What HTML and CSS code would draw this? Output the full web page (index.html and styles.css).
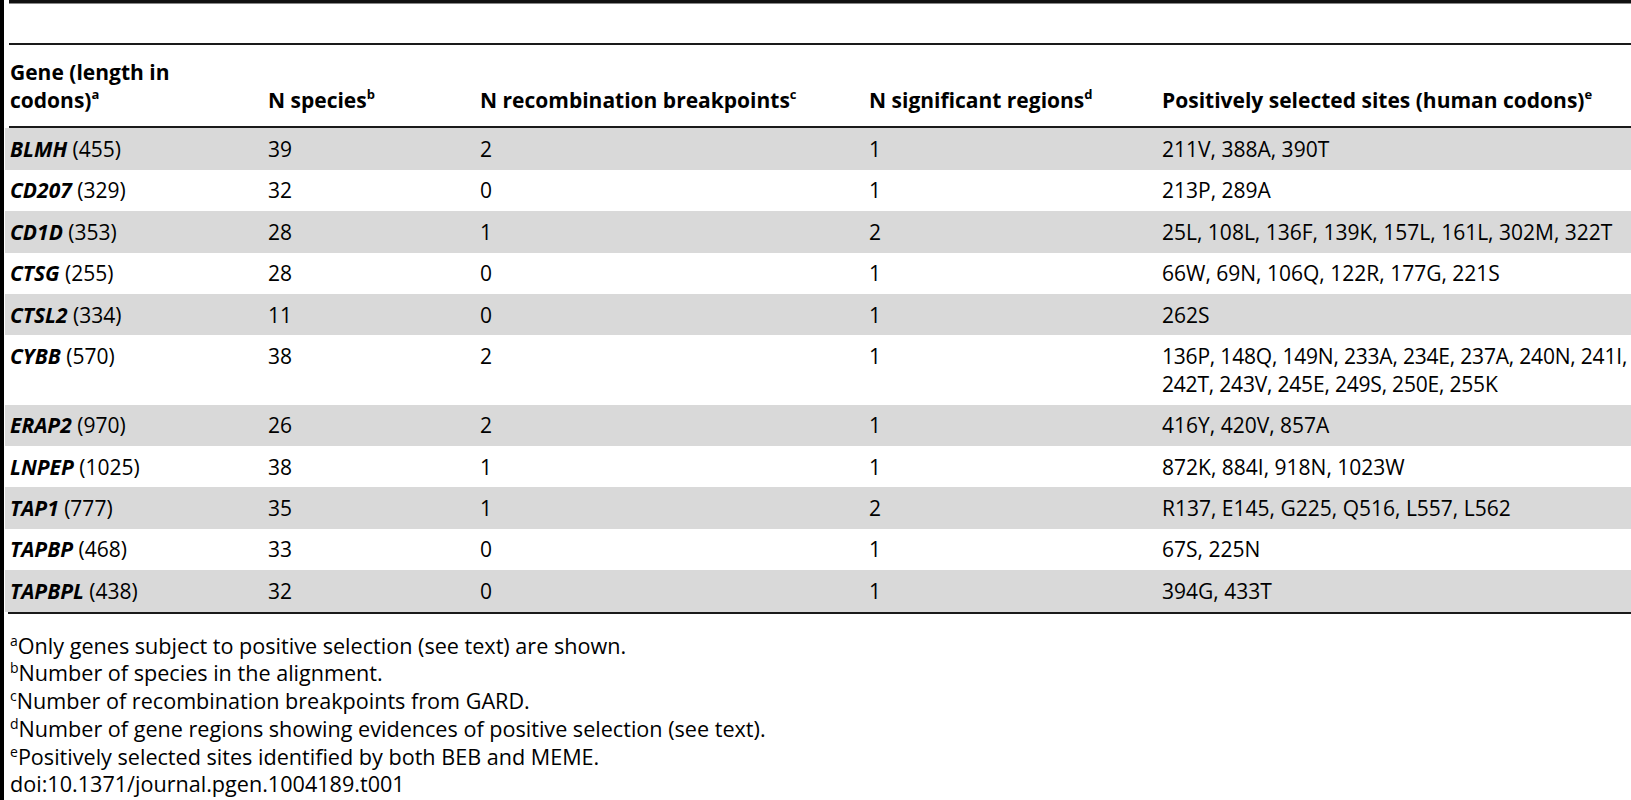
FILE: index.html
```html
<!DOCTYPE html>
<html lang="en">
<head>
    <meta charset="UTF-8">
    <meta name="viewport" content="width=device-width, initial-scale=1.0">
    <title>Table 1 - Positively selected genes</title>
    <link rel="stylesheet" href="styles.css">
</head>
<body>
    <div class="page">
        <!-- Rules above the header -->
        <div class="rule rule-top"></div>
        <div class="rule rule-thin"></div>

        <div class="data-table">
            <!-- Header -->
            <div class="row head-row">
                <div class="cell gene-col">Gene (length in codons)<sup>a</sup></div>
                <div class="cell">N species<sup>b</sup></div>
                <div class="cell">N recombination breakpoints<sup>c</sup></div>
                <div class="cell">N significant regions<sup>d</sup></div>
                <div class="cell">Positively selected sites (human codons)<sup>e</sup></div>
            </div>
            <div class="rule rule-mid"></div>

            <!-- Body -->
            <div class="row shaded">
                <div class="cell"><em class="gene">BLMH</em> (455)</div>
                <div class="cell">39</div>
                <div class="cell">2</div>
                <div class="cell">1</div>
                <div class="cell">211V, 388A, 390T</div>
            </div>
            <div class="row">
                <div class="cell"><em class="gene">CD207</em> (329)</div>
                <div class="cell">32</div>
                <div class="cell">0</div>
                <div class="cell">1</div>
                <div class="cell">213P, 289A</div>
            </div>
            <div class="row shaded">
                <div class="cell"><em class="gene">CD1D</em> (353)</div>
                <div class="cell">28</div>
                <div class="cell">1</div>
                <div class="cell">2</div>
                <div class="cell">25L, 108L, 136F, 139K, 157L, 161L, 302M, 322T</div>
            </div>
            <div class="row">
                <div class="cell"><em class="gene">CTSG</em> (255)</div>
                <div class="cell">28</div>
                <div class="cell">0</div>
                <div class="cell">1</div>
                <div class="cell">66W, 69N, 106Q, 122R, 177G, 221S</div>
            </div>
            <div class="row shaded">
                <div class="cell"><em class="gene">CTSL2</em> (334)</div>
                <div class="cell">11</div>
                <div class="cell">0</div>
                <div class="cell">1</div>
                <div class="cell">262S</div>
            </div>
            <div class="row">
                <div class="cell"><em class="gene">CYBB</em> (570)</div>
                <div class="cell">38</div>
                <div class="cell">2</div>
                <div class="cell">1</div>
                <div class="cell long-list">136P, 148Q, 149N, 233A, 234E, 237A, 240N, 241I,<br>242T, 243V, 245E, 249S, 250E, 255K</div>
            </div>
            <div class="row shaded">
                <div class="cell"><em class="gene">ERAP2</em> (970)</div>
                <div class="cell">26</div>
                <div class="cell">2</div>
                <div class="cell">1</div>
                <div class="cell">416Y, 420V, 857A</div>
            </div>
            <div class="row">
                <div class="cell"><em class="gene">LNPEP</em> (1025)</div>
                <div class="cell">38</div>
                <div class="cell">1</div>
                <div class="cell">1</div>
                <div class="cell">872K, 884I, 918N, 1023W</div>
            </div>
            <div class="row shaded">
                <div class="cell"><em class="gene">TAP1</em> (777)</div>
                <div class="cell">35</div>
                <div class="cell">1</div>
                <div class="cell">2</div>
                <div class="cell">R137, E145, G225, Q516, L557, L562</div>
            </div>
            <div class="row">
                <div class="cell"><em class="gene">TAPBP</em> (468)</div>
                <div class="cell">33</div>
                <div class="cell">0</div>
                <div class="cell">1</div>
                <div class="cell">67S, 225N</div>
            </div>
            <div class="row shaded">
                <div class="cell"><em class="gene">TAPBPL</em> (438)</div>
                <div class="cell">32</div>
                <div class="cell">0</div>
                <div class="cell">1</div>
                <div class="cell">394G, 433T</div>
            </div>
        </div>
        <div class="rule rule-mid"></div>

        <!-- Footnotes -->
        <div class="notes">
            <p><sup>a</sup>Only genes subject to positive selection (see text) are shown.</p>
            <p><sup>b</sup>Number of species in the alignment.</p>
            <p><sup>c</sup>Number of recombination breakpoints from GARD.</p>
            <p><sup>d</sup>Number of gene regions showing evidences of positive selection (see text).</p>
            <p><sup>e</sup>Positively selected sites identified by both BEB and MEME.</p>
            <p>doi:10.1371/journal.pgen.1004189.t001</p>
        </div>
    </div>
</body>
</html>
```

FILE: styles.css
```css
body {
    margin: 0;
    background: white;
    font-family: 'Open Sans', 'Noto Sans', sans-serif;
    color: #000;
}

.page {
    border-left: 4px solid #000;
    min-height: 100vh;
    box-sizing: border-box;
    overflow: hidden;
}

.rule {
    margin-left: 5px;
}

.rule-top {
    height: 0;
    border-top: 3px solid #111;
    border-bottom: 1px solid #888;
    margin-bottom: 39px;
}

.rule-thin,
.rule-mid {
    height: 2px;
    background: #1a1a1a;
}

.rule-mid {
    margin-left: 4px;
}

.data-table {
    margin-left: 1px;
}

.row {
    display: grid;
    grid-template-columns: 258px 212px 389px 293px 1fr;
    font-size: 21px;
    line-height: 28px;
}

.row.shaded {
    background: #d9d9d9;
}

.cell {
    padding: 6.7px 5px;
}

.head-row {
    align-items: end;
    font-weight: 700;
    padding: 6px 0;
}

.head-row .gene-col {
    max-width: 200px;
}

.long-list {
    padding-right: 0;
    white-space: nowrap;
    letter-spacing: -0.2px;
}

sup {
    font-size: 13px;
    line-height: 0;
    vertical-align: 9px;
}

.gene {
    font-weight: 700;
    font-style: italic;
}

.notes {
    padding: 18px 0 0 6px;
    font-size: 21.6px;
    line-height: 27.8px;
}

.notes p {
    margin: 0;
}

.notes sup {
    font-size: 14px;
    vertical-align: 8px;
}
```
